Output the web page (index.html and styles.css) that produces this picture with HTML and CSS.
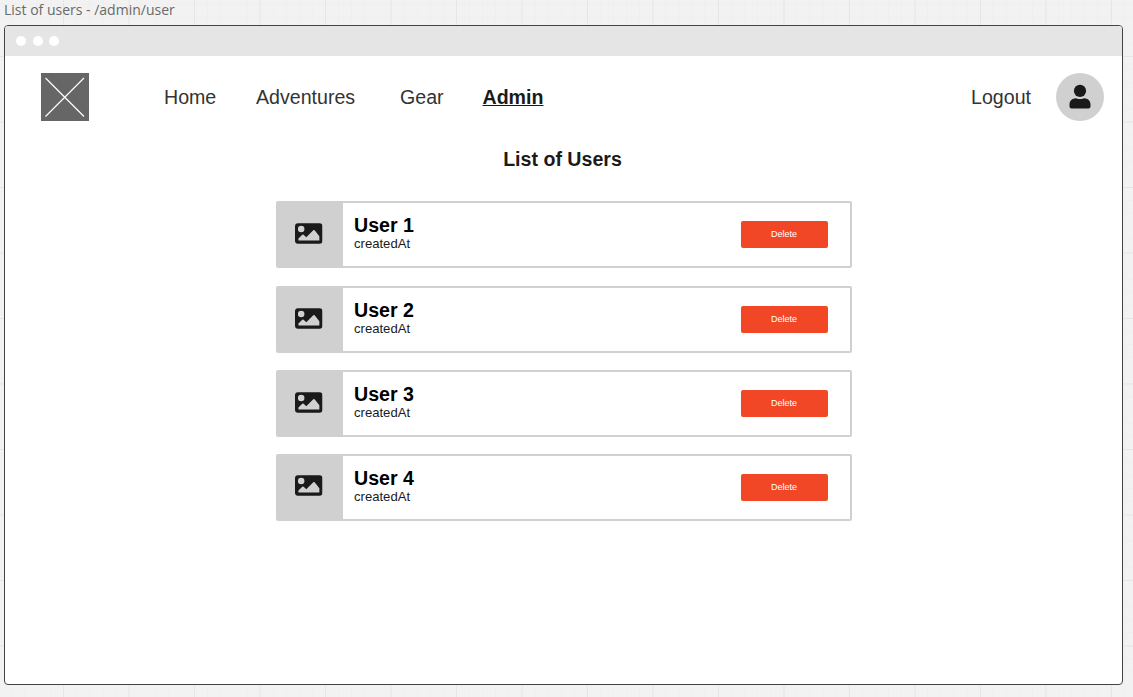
FILE: index.html
```html
<!DOCTYPE html>
<html lang="en">
<head>
<meta charset="utf-8">
<title>List of users</title>
<link rel="stylesheet" href="styles.css">
</head>
<body>
<svg width="0" height="0" class="defs">
  <symbol id="picture" viewBox="0 0 28 21">
    <path fill-rule="evenodd" d="M3 0H25a3 3 0 0 1 3 3V18a3 3 0 0 1-3 3H3a3 3 0 0 1-3-3V3a3 3 0 0 1 3-3ZM6.300 2.700a3.300 3.300 0 1 0 0 6.600a3.300 3.300 0 0 0 0-6.600ZM3.500 17.500H24.800V13.200L20 7.200Q19.300 6.500 18.600 7.200L11.500 14.300L8.800 11.700Q8.100 11.200 7.400 11.700L3.500 15.500Z"/>
  </symbol>
</svg>
<div class="frame-label">List of users - /admin/user</div>
<div class="window">
  <div class="titlebar"><i class="dot"></i><i class="dot"></i><i class="dot"></i></div>
  <header class="header">
    <svg class="logo" viewBox="0 0 48 48"><path d="M4.500 5L43 43.500M43 5L4.500 43.500"/></svg>
    <nav class="nav">
      <a class="link home">Home</a>
      <a class="link adventures">Adventures</a>
      <a class="link gear">Gear</a>
      <a class="link active">Admin</a>
    </nav>
    <a class="link logout">Logout</a>
    <div class="avatar">
      <svg class="person" viewBox="0 0 22 25"><circle cx="11" cy="6.900" r="6.100"/><path d="M7 14.200Q11 16 15 14.200C19 14.200 21.500 17 21.500 20.500V22.500Q21.500 24.500 19.500 24.500H2.500Q.5 24.500 .5 22.500V20.500C.5 17 3 14.200 7 14.200Z"/></svg>
    </div>
  </header>
  <main class="main">
    <h1 class="heading">List of Users</h1>
    <div class="users">
      <div class="card">
        <div class="thumb"><svg class="picture"><use href="#picture"/></svg></div>
        <div class="info"><div class="name">User 1</div><div class="created">createdAt</div></div>
        <button class="delete">Delete</button>
      </div>
      <div class="card">
        <div class="thumb"><svg class="picture"><use href="#picture"/></svg></div>
        <div class="info"><div class="name">User 2</div><div class="created">createdAt</div></div>
        <button class="delete">Delete</button>
      </div>
      <div class="card">
        <div class="thumb"><svg class="picture"><use href="#picture"/></svg></div>
        <div class="info"><div class="name">User 3</div><div class="created">createdAt</div></div>
        <button class="delete">Delete</button>
      </div>
      <div class="card">
        <div class="thumb"><svg class="picture"><use href="#picture"/></svg></div>
        <div class="info"><div class="name">User 4</div><div class="created">createdAt</div></div>
        <button class="delete">Delete</button>
      </div>
    </div>
  </main>
</div>
</body>
</html>
```
FILE: styles.css
```css
* { box-sizing: border-box; }
body {
  margin: 0;
  height: 697px;
  overflow: hidden;
  padding: 0 10px 0 4px;
  font-family: "Liberation Sans", Arial, sans-serif;
  color: #1a1a1a;
  background-color: #f2f2f2;
  background-image:
    linear-gradient(90deg, #e6e6e6 1px, transparent 1px),
    linear-gradient(#e6e6e6 1px, transparent 1px),
    linear-gradient(90deg, #efefef 1px, transparent 1px),
    linear-gradient(#efefef 1px, transparent 1px);
  background-size: 65.5px 65.5px, 65.5px 65.5px, 13.1px 13.1px, 13.1px 13.1px;
  background-position: 63px 0, 0 56px, 63px 0, 0 56px;
}
.defs { position: absolute; }
.frame-label {
  height: 24.500px;
  font: 14px/20px "Open Sans", sans-serif;
  color: #696969;
  white-space: nowrap;
}
.window {
  height: 660px;
  border: 1px solid #444;
  border-radius: 4px;
  background: #fff;
  overflow: hidden;
}
.titlebar {
  height: 30px;
  display: flex;
  align-items: center;
  gap: 6.500px;
  padding-left: 11px;
  background: #e5e5e5;
}
.dot { width: 10px; height: 10px; border-radius: 50%; background: #fff; }
.header {
  display: flex;
  align-items: center;
  height: 82px;
  padding: 0 18px 0 36px;
}
.logo { width: 48px; height: 48px; background: #666; }
.logo path { stroke: #fff; stroke-width: 1.200; }
.nav { display: flex; margin-left: 75px; }
.link { font-size: 19.600px; line-height: 24px; color: #333; white-space: nowrap; }
.home { width: 92px; }
.adventures { width: 144px; }
.gear { width: 82.500px; }
.active {
  font-weight: bold;
  color: #1a1a1a;
  text-decoration: underline;
}
.logout { margin-left: auto; margin-right: 25px; }
.avatar {
  display: flex;
  align-items: center;
  justify-content: center;
  width: 48px;
  height: 48px;
  border-radius: 50%;
  background: #d0d0d0;
}
.person { width: 22px; height: 25px; fill: #1a1a1a; }
.main { padding: 9px 0 0 270.500px; }
.heading {
  width: 574px;
  margin: 0 0 30.500px;
  font-size: 19.600px;
  line-height: 24px;
  text-align: center;
}
.users { display: flex; flex-direction: column; gap: 17px; width: 576.500px; }
.card {
  display: flex;
  align-items: center;
  height: 67px;
  padding-right: 22.500px;
  border: 2px solid #d0d0d0;
  border-radius: 2px;
}
.card:first-child { margin-bottom: 1px; }
.card:last-child { margin-top: -.5px; }
.thumb {
  display: flex;
  align-items: center;
  justify-content: center;
  width: 65.500px;
  height: 63px;
  padding: 0 3px 3px 0;
  background: #d0d0d0;
}
.picture { width: 27.500px; height: 21px; fill: #1a1a1a; }
.info { margin-left: 11px; padding-bottom: 2px; }
.name { font-size: 19.600px; font-weight: bold; line-height: 20px; color: #000; }
.created { font-size: 13.100px; line-height: 17px; }
.delete {
  width: 87px;
  height: 27px;
  margin-left: auto;
  padding: 0;
  border: 0;
  border-radius: 2px;
  background: #f24726;
  color: #fff;
  font: 9px/27px "Liberation Sans", Arial, sans-serif;
}
```
